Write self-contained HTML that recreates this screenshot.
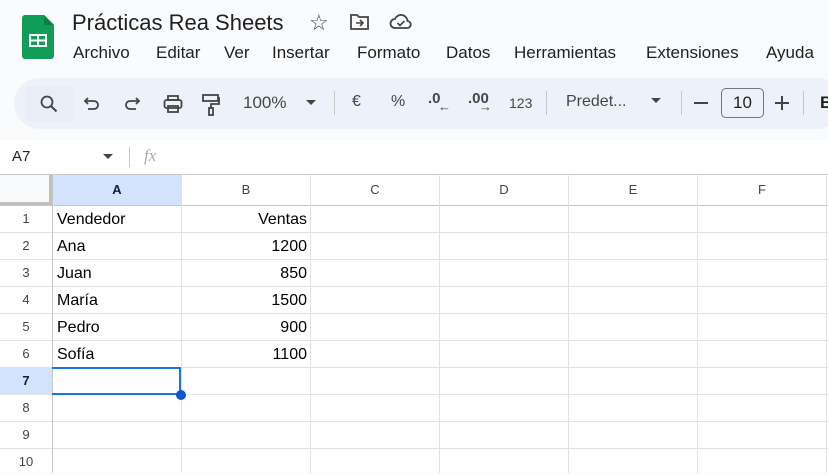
<!DOCTYPE html>
<html><head><meta charset="utf-8"><style>
*{margin:0;padding:0;box-sizing:border-box}
body{width:828px;height:473px;overflow:hidden;background:#f9fbfd;font-family:"Liberation Sans",Arial,sans-serif;position:relative;color:#1f1f1f}
.a{position:absolute;white-space:nowrap}
.menu{top:43px;font-size:17px;color:#1f1f1f}
.tb{color:#444746;font-size:17px;top:93px}
.ic{position:absolute}
.grid{position:absolute;left:0;top:174px;width:828px;height:299px;background:#fff}
.hl{position:absolute;height:1px;background:#e1e1e1;left:0;width:828px}
.vl{position:absolute;width:1px;background:#e1e1e1;top:0;height:299px}
.ch{position:absolute;top:0;height:31px;line-height:31px;text-align:center;font-size:13px;color:#444}
.rh{position:absolute;left:0;width:52px;height:27px;line-height:27px;text-align:center;font-size:13px;color:#444}
.c{position:absolute;font-size:16px;height:27px;line-height:27px;color:#000}
</style></head><body>
<!-- logo -->
<svg class="ic" style="left:22px;top:15px" width="32" height="44" viewBox="0 0 32 44">
<path d="M3 0H22L32 10V41a3 3 0 0 1-3 3H3a3 3 0 0 1-3-3V3a3 3 0 0 1 3-3z" fill="#0f9d58"/>
<path d="M22 0L32 10H22z" fill="#087f45"/>
<rect x="7" y="19" width="18" height="13" fill="#fff"/>
<rect x="9" y="21" width="6" height="3.5" fill="#0f9d58"/><rect x="17" y="21" width="6" height="3.5" fill="#0f9d58"/>
<rect x="9" y="26.5" width="6" height="3.5" fill="#0f9d58"/><rect x="17" y="26.5" width="6" height="3.5" fill="#0f9d58"/>
</svg>
<div class="a" style="left:72px;top:10px;font-size:22px;color:#1f1f1f">Prácticas Rea Sheets</div>
<div class="a" style="left:309px;top:10px;font-size:22px;color:#444">☆</div>
<svg class="ic" style="left:349px;top:13px" width="22" height="18" viewBox="0 0 22 18"><path d="M2 2h6l2 2h9v12H2z" fill="none" stroke="#444" stroke-width="1.8"/><path d="M7 10h7M11 7l3 3-3 3" fill="none" stroke="#444" stroke-width="1.6"/></svg>
<svg class="ic" style="left:389px;top:12px" width="24" height="20" viewBox="0 0 24 20"><path d="M6 16a4.5 4.5 0 0 1 0-9 6.5 6.5 0 0 1 12.5 2A3.5 3.5 0 0 1 18 16z" fill="none" stroke="#444" stroke-width="1.8"/><path d="M8.5 11l2.5 2.5 4.5-4.5" fill="none" stroke="#444" stroke-width="1.6"/></svg>
<div class="a menu" style="left:73px">Archivo</div>
<div class="a menu" style="left:156px">Editar</div>
<div class="a menu" style="left:224px">Ver</div>
<div class="a menu" style="left:272px">Insertar</div>
<div class="a menu" style="left:357px">Formato</div>
<div class="a menu" style="left:446px">Datos</div>
<div class="a menu" style="left:514px">Herramientas</div>
<div class="a menu" style="left:646px">Extensiones</div>
<div class="a menu" style="left:766px">Ayuda</div>
<!-- toolbar -->
<div class="a" style="left:14px;top:78px;width:830px;height:51px;background:#edf2fa;border-radius:26px"></div>
<div class="a" style="left:26px;top:86px;width:47px;height:35px;background:#e9eef6"></div>
<svg class="ic" style="left:39px;top:94px" width="20" height="20" viewBox="0 0 20 20"><circle cx="8" cy="8" r="5.5" fill="none" stroke="#444" stroke-width="1.8"/><path d="M12 12l5.5 5.5" stroke="#444" stroke-width="2"/></svg>
<svg class="ic" style="left:82px;top:95px" width="20" height="18" viewBox="0 0 20 18"><path d="M6 3L3 6l3 3" fill="none" stroke="#444" stroke-width="1.8"/><path d="M3 6h9a4 4 0 0 1 0 8H6" fill="none" stroke="#444" stroke-width="1.8"/></svg>
<svg class="ic" style="left:122px;top:95px" width="20" height="18" viewBox="0 0 20 18"><path d="M14 3l3 3-3 3" fill="none" stroke="#444" stroke-width="1.8"/><path d="M17 6H8a4 4 0 0 0 0 8h6" fill="none" stroke="#444" stroke-width="1.8"/></svg>
<svg class="ic" style="left:162px;top:93px" width="22" height="22" viewBox="0 0 22 22"><rect x="6" y="3" width="10" height="4" fill="none" stroke="#444" stroke-width="1.8"/><rect x="2.5" y="7" width="17" height="8" rx="2" fill="none" stroke="#444" stroke-width="1.8"/><rect x="6" y="13" width="10" height="6" fill="none" stroke="#444" stroke-width="1.8"/></svg>
<svg class="ic" style="left:201px;top:93px" width="20" height="24" viewBox="0 0 20 24"><rect x="2" y="2" width="15" height="6" fill="none" stroke="#444" stroke-width="1.8"/><path d="M17 5h1v6H10v4" fill="none" stroke="#444" stroke-width="1.8"/><rect x="8" y="15" width="4" height="7" fill="none" stroke="#444" stroke-width="1.8"/></svg>
<div class="a tb" style="left:243px">100%</div>
<div class="a" style="left:306px;top:100px;border:5px solid transparent;border-top:5px solid #444"></div>
<div class="a" style="left:334px;top:91px;width:1px;height:24px;background:#c7c7c7"></div>
<div class="a tb" style="left:352px;font-size:16px">€</div>
<div class="a tb" style="left:391px;font-size:16px">%</div>
<div class="a tb" style="left:428px;font-size:15px;font-weight:bold;top:90px">.0</div>
<div class="a tb" style="left:438px;font-size:13px;top:99px">←</div>
<div class="a tb" style="left:468px;font-size:15px;font-weight:bold;top:90px">.00</div>
<div class="a tb" style="left:479px;font-size:13px;top:99px">→</div>
<div class="a tb" style="left:509px;font-size:14px;top:95px">123</div>
<div class="a" style="left:546px;top:91px;width:1px;height:24px;background:#c7c7c7"></div>
<div class="a tb" style="left:566px;font-size:16px">Predet...</div>
<div class="a" style="left:651px;top:98px;border:5px solid transparent;border-top:5px solid #444"></div>
<div class="a" style="left:681px;top:91px;width:1px;height:24px;background:#c7c7c7"></div>
<div class="a" style="left:694px;top:102px;width:14px;height:2px;background:#444"></div>
<div class="a" style="left:721px;top:88px;width:43px;height:30px;border:1px solid #747775;border-radius:5px;font-size:17px;text-align:center;line-height:28px;color:#1f1f1f">10</div>
<div class="a" style="left:775px;top:102px;width:14px;height:2px;background:#444"></div>
<div class="a" style="left:781px;top:96px;width:2px;height:14px;background:#444"></div>
<div class="a" style="left:803px;top:91px;width:1px;height:24px;background:#c7c7c7"></div>
<div class="a tb" style="left:820px;font-weight:bold;color:#1f1f1f">B</div>
<!-- formula bar -->
<div class="a" style="left:0;top:140px;width:828px;height:34px;background:#fff"></div>
<div class="a" style="left:12px;top:148px;font-size:15px;color:#1f1f1f">A7</div>
<div class="a" style="left:103px;top:154px;border:5px solid transparent;border-top:5px solid #444"></div>
<div class="a" style="left:129px;top:147px;width:1px;height:20px;background:#c7c7c7"></div>
<div class="a" style="left:144px;top:146px;font-size:17px;font-style:italic;color:#aaa;font-family:'Liberation Serif',serif">fx</div>
<!-- grid -->
<div class="grid">
<div class="hl" style="top:0;background:#c7c7c7"></div>
<div class="a" style="left:0;top:1px;width:52px;height:30px;background:#f8f9fa"></div>
<div class="a" style="left:49px;top:1px;width:4px;height:30px;background:#c0c0c0"></div>
<div class="a" style="left:0;top:28px;width:52px;height:4px;background:#c0c0c0"></div>
<div class="a" style="left:53px;top:1px;width:128px;height:30px;background:#d3e3fd"></div>
<div class="a" style="left:0;top:194px;width:52px;height:26px;background:#d3e3fd"></div>
<div class="hl" style="top:31px;background:#c7c7c7"></div>
<div class="hl" style="top:58px"></div><div class="hl" style="top:85px"></div><div class="hl" style="top:112px"></div><div class="hl" style="top:139px"></div><div class="hl" style="top:166px"></div><div class="hl" style="top:193px"></div><div class="hl" style="top:220px"></div><div class="hl" style="top:247px"></div><div class="hl" style="top:274px"></div>
<div class="vl" style="left:52px;background:#c7c7c7"></div>
<div class="vl" style="left:181px"></div><div class="vl" style="left:310px"></div><div class="vl" style="left:439px"></div><div class="vl" style="left:568px"></div><div class="vl" style="left:697px"></div><div class="vl" style="left:826px"></div>
<div class="ch" style="left:53px;width:128px;font-weight:bold;color:#0b1f47">A</div>
<div class="ch" style="left:182px;width:128px">B</div>
<div class="ch" style="left:311px;width:128px">C</div>
<div class="ch" style="left:440px;width:128px">D</div>
<div class="ch" style="left:569px;width:128px">E</div>
<div class="ch" style="left:698px;width:128px">F</div>
<div class="rh" style="top:31px">1</div><div class="rh" style="top:58px">2</div><div class="rh" style="top:85px">3</div><div class="rh" style="top:112px">4</div><div class="rh" style="top:139px">5</div><div class="rh" style="top:166px">6</div><div class="rh" style="top:193px;font-weight:bold;color:#0b1f47">7</div><div class="rh" style="top:220px">8</div><div class="rh" style="top:247px">9</div><div class="rh" style="top:274px">10</div>
<div class="c" style="left:57px;top:32px">Vendedor</div>
<div class="c" style="left:57px;top:59px">Ana</div>
<div class="c" style="left:57px;top:86px">Juan</div>
<div class="c" style="left:57px;top:113px">María</div>
<div class="c" style="left:57px;top:140px">Pedro</div>
<div class="c" style="left:57px;top:167px">Sofía</div>
<div class="c" style="right:521px;top:32px">Ventas</div>
<div class="c" style="right:521px;top:59px">1200</div>
<div class="c" style="right:521px;top:86px">850</div>
<div class="c" style="right:521px;top:113px">1500</div>
<div class="c" style="right:521px;top:140px">900</div>
<div class="c" style="right:521px;top:167px">1100</div>
<div class="a" style="left:52px;top:193px;width:129px;height:28px;border:2px solid #1a73e8;border-left:none"></div>
<div class="a" style="left:176px;top:216px;width:10px;height:10px;border-radius:50%;background:#0b57d0"></div>
</div>
</body></html>
